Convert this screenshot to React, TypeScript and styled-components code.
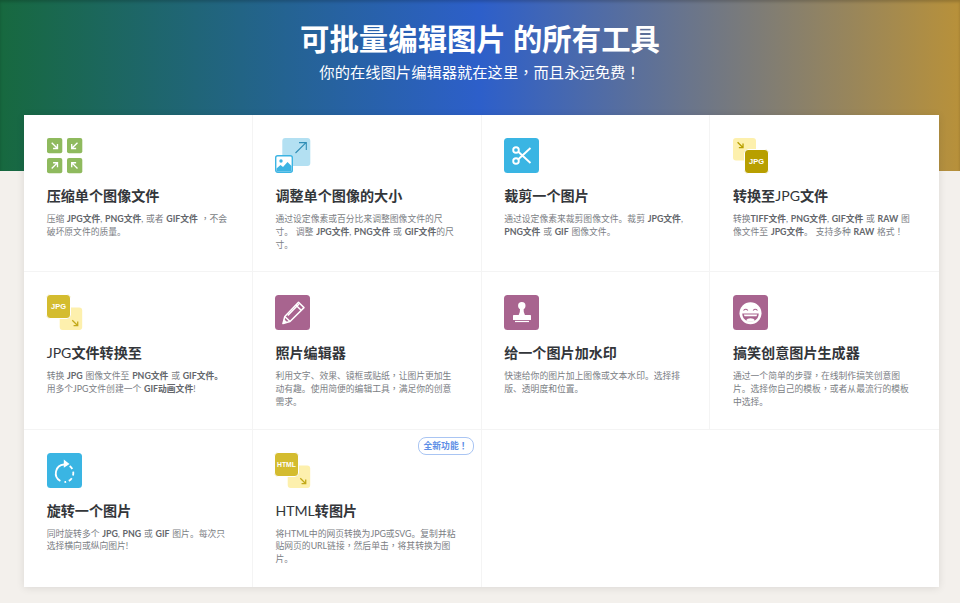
import React from "react";
import styled, { createGlobalStyle } from "styled-components";

const Global = createGlobalStyle`
  html, body { margin: 0; padding: 0; background: #f3f0ec; }
  body { font-family: "Lato", "Noto Sans CJK SC", sans-serif; }
  * { box-sizing: border-box; }
`;

const Page = styled.div`
  width: 960px;
  height: 603px;
  overflow: hidden;
`;

const Hero = styled.header`
  height: 171px;
  padding-top: 20px;
  text-align: center;
  color: #fff;
  background: linear-gradient(90deg, #17693f 0%, #2d5fca 50%, #b8913a 100%);
  box-shadow: inset 0 2px 3px rgba(0, 0, 0, 0.18);
`;

const HeroTitle = styled.h1`
  margin: 0;
  height: 38px;
  font-size: 29.4px;
  line-height: 38px;
  font-weight: 700;
`;

const HeroSub = styled.p`
  margin: 2px 0 0;
  font-size: 15.3px;
  line-height: 22px;
  font-weight: 400;
`;

const Punct = styled.span`
  font-family: "Noto Sans CJK TC", sans-serif;
`;

const Card = styled.main`
  width: 915px;
  height: 472px;
  margin: -56px 0 0 24px;
  position: relative;
  background: #fff;
  display: grid;
  grid-template-columns: repeat(4, 1fr);
  grid-auto-rows: 157.33px;
  box-shadow: 0 1px 8px rgba(0, 0, 0, 0.1);
`;

const Cell = styled.article`
  position: relative;
  padding: 23px 23px 0 22.7px;
  border-right: 1px solid #f4f4f4;
  border-bottom: 1px solid #f4f4f4;
  &:nth-child(4n) { border-right: 0; }
  &:nth-child(n + 9) { border-bottom: 0; }
`;

const Icon = styled.svg`
  display: block;
  width: 35px;
  height: 35px;
  overflow: visible;
`;

const Title = styled.h2`
  margin: 13px 0 0;
  font-size: 14.1px;
  line-height: 20px;
  font-weight: 700;
  color: #33363a;
`;

const LatinTitle = styled.span`
  font-weight: 400;
`;

const Desc = styled.p`
  margin: 7px 0 0;
  font-size: 8.8px;
  line-height: 12.8px;
  word-spacing: 0.5px;
  color: #7b7e84;
`;

const Strong = styled.b`
  font-weight: 700;
  color: #63666b;
`;

const Badge = styled.span`
  position: absolute;
  top: 7px;
  right: 7px;
  width: 56px;
  height: 18px;
  border: 1px solid #a9c5f3;
  border-radius: 8px;
  font-size: 8.8px;
  line-height: 16px;
  font-weight: 700;
  text-align: center;
  color: #5c8ee6;
  background: #fff;
`;

const LABEL = { fill: "#fff", fontFamily: "Liberation Sans, sans-serif", fontWeight: 700, textAnchor: "middle" } as const;

const Arrow = ({ x, y, r, s = 1, color = "#fff" }: { x: number; y: number; r: number; s?: number; color?: string }) => (
  <g transform={`translate(${x} ${y}) rotate(${r}) scale(${s})`} fill="none" stroke={color} strokeWidth="1.6">
    <path d="M-3.400-3.400 3.200 3.200M3.400-1.800V3.400H-1.800" />
  </g>
);

const Compress = () => (
  <Icon viewBox="0 0 35 35">
    <g fill="#8fba5e">
      <rect width="15.300" height="15.300" rx="2" />
      <rect x="20" width="15.300" height="15.300" rx="2" />
      <rect y="20" width="15.300" height="15.300" rx="2" />
      <rect x="20" y="20" width="15.300" height="15.300" rx="2" />
    </g>
    <Arrow x={7.600} y={7.600} r={0} s={0.85} />
    <Arrow x={27.600} y={7.600} r={90} s={0.85} />
    <Arrow x={7.600} y={27.600} r={-90} s={0.85} />
    <Arrow x={27.600} y={27.600} r={180} s={0.85} />
  </Icon>
);

const Resize = () => (
  <Icon viewBox="0 0 35 35">
    <rect x="7.300" width="28" height="28" rx="3" fill="#b3e0f2" />
    <path d="M20.500 15 31 4.700M24 4.600h7.300V12" fill="none" stroke="#2f8db6" strokeWidth="1.100" />
    <rect x=".7" y="17.700" width="16.600" height="16.600" rx="2" fill="#fff" stroke="#3cb4e3" strokeWidth="1.400" />
    <circle cx="6" cy="23" r="1.700" fill="#3cb4e3" />
    <path d="M1.500 33.500v-3l4-3.500 2.500 2 4.500-5 4 4v5.500z" fill="#3cb4e3" />
  </Icon>
);

const Crop = () => (
  <Icon viewBox="0 0 35 35">
    <rect width="35" height="35" rx="3.500" fill="#3ab5e3" />
    <g fill="none" stroke="#fff" strokeWidth="1.900">
      <circle cx="12" cy="12" r="2.800" />
      <circle cx="12" cy="23" r="2.800" />
      <path d="M14.300 13.800 26.500 25M14.300 21.200 26.500 10" />
    </g>
  </Icon>
);

const ToJpg = () => (
  <Icon viewBox="0 0 35 35">
    <rect width="23" height="22.500" rx="3" fill="#fdf0ad" />
    <Arrow x={7.300} y={7} r={0} s={0.8} color="#b89f00" />
    <rect x="11.500" y="11.500" width="24" height="24" rx="3.500" fill="#b89f00" stroke="#fff" strokeWidth="1" />
    <text x="23.500" y="26" fontSize="7.500" {...LABEL}>JPG</text>
  </Icon>
);

const FromLabel = ({ label, size }: { label: string; size: number }) => (
  <Icon viewBox="0 0 35 35">
    <rect x="12.700" y="12.500" width="22.500" height="22.500" rx="3" fill="#fdf0ad" />
    <Arrow x={28} y={28} r={0} s={0.8} color="#c2a91a" />
    <rect x="-.5" y="-.5" width="24" height="24" rx="3.500" fill="#d4bc2f" stroke="#fff" strokeWidth="1" />
    <text x="11.500" y="14.200" fontSize={size} {...LABEL}>{label}</text>
  </Icon>
);

const Editor = () => (
  <Icon viewBox="0 0 35 35">
    <rect width="35" height="35" rx="3.500" fill="#a8648f" />
    <g fill="none" stroke="#fff" strokeWidth="1.500" strokeLinejoin="round">
      <path d="M8 28.500 9.800 21.500 23.500 7.300 29 12.600 15 26.500z" />
      <path d="M9.800 21.500 15 26.500M20.800 10 26.200 15.300M12.800 20.500 24 9" />
    </g>
    <path d="M7.500 29 9 24l3.500 3.500z" fill="#fff" />
  </Icon>
);

const Stamp = () => (
  <Icon viewBox="0 0 35 35">
    <rect width="35" height="35" rx="3.500" fill="#a8648f" />
    <circle cx="17.800" cy="10.800" r="3.700" fill="#fff" />
    <path d="M16 13.500h3.600l.2 3.500 1.200 3.200h-6.400l1.200-3.200z" fill="#fff" />
    <rect x="9" y="20" width="18" height="5" rx=".6" fill="#fff" />
    <rect x="11" y="25.900" width="14" height="1.200" fill="#fff" />
  </Icon>
);

const Laugh = () => (
  <Icon viewBox="0 0 35 35">
    <rect width="35" height="35" rx="3.500" fill="#a8648f" />
    <circle cx="17.500" cy="18.300" r="11" fill="#fff" />
    <path d="M10.500 15.500q2.200-2.600 4.400 0M20.100 15.500q2.200-2.600 4.400 0" fill="none" stroke="#a8648f" strokeWidth="1.100" />
    <path d="M9.300 18.500h16.400c0 4.800-3.400 8-8.200 8s-8.200-3.200-8.200-8z" fill="#a8648f" />
    <path d="M10.800 19.600h13.400l-.7 1.600H11.500z" fill="#fff" />
    <path d="M13 25.300a4.800 3 0 0 1 9 0 8 8 0 0 1-9 0z" fill="#fff" />
  </Icon>
);

const Rotate = () => (
  <Icon viewBox="0 0 35 35">
    <rect width="35" height="35" rx="3.500" fill="#3ab5e3" />
    <g fill="none" stroke="#fff" strokeWidth="1.800">
      <path d="M17 11.500a8.800 8.800 0 0 0-3.600 16.500" />
      <path d="M17.500 11.300a8.800 8.800 0 0 1 8.800 8.900 8.800 8.800 0 0 1-8.800 8.800" strokeDasharray="4 2.800" strokeDashoffset="-5.500" />
    </g>
    <path d="M16.800 6.500 22.500 11l-5.700 3.800z" fill="#fff" />
  </Icon>
);

type Item = { icon: React.ReactNode; title: React.ReactNode; desc: React.ReactNode; badge?: React.ReactNode };

const items: Item[] = [
  {
    icon: <Compress />,
    title: "压缩单个图像文件",
    desc: <>压缩 <Strong>JPG文件</Strong>, <Strong>PNG文件</Strong>, 或者 <Strong>GIF文件</Strong> <Punct>，</Punct>不会破坏原文件的质量。</>,
  },
  {
    icon: <Resize />,
    title: "调整单个图像的大小",
    desc: <>通过设定像素或百分比来调整图像文件的尺寸。 调整 <Strong>JPG文件</Strong>, <Strong>PNG文件</Strong> 或 <Strong>GIF文件</Strong>的尺寸。</>,
  },
  {
    icon: <Crop />,
    title: "裁剪一个图片",
    desc: <>通过设定像素来裁剪图像文件。裁剪 <Strong>JPG文件</Strong>, <Strong>PNG文件</Strong> 或 <Strong>GIF</Strong> 图像文件。</>,
  },
  {
    icon: <ToJpg />,
    title: <>转换至<LatinTitle>JPG</LatinTitle>文件</>,
    desc: <>转换<Strong>TIFF文件</Strong>, <Strong>PNG文件</Strong>, <Strong>GIF文件</Strong> 或 <Strong>RAW</Strong> 图像文件至 <Strong>JPG文件</Strong>。 支持多种 <Strong>RAW</Strong> 格式<Punct>！</Punct></>,
  },
  {
    icon: <FromLabel label="JPG" size={7.500} />,
    title: <><LatinTitle>JPG</LatinTitle>文件转换至</>,
    desc: <>转换 <Strong>JPG</Strong> 图像文件至 <Strong>PNG文件</Strong> 或 <Strong>GIF文件。</Strong>用多个JPG文件创建一个 <Strong>GIF动画文件</Strong>!</>,
  },
  {
    icon: <Editor />,
    title: "照片编辑器",
    desc: <>利用文字、效果、镜框或贴纸<Punct>，</Punct>让图片更加生动有趣。使用简便的编辑工具<Punct>，</Punct>满足你的创意需求。</>,
  },
  {
    icon: <Stamp />,
    title: "给一个图片加水印",
    desc: "快速给你的图片加上图像或文本水印。选择排版、透明度和位置。",
  },
  {
    icon: <Laugh />,
    title: "搞笑创意图片生成器",
    desc: <>通过一个简单的步骤<Punct>，</Punct>在线制作搞笑创意图片。选择你自己的模板<Punct>，</Punct>或者从最流行的模板中选择。</>,
  },
  {
    icon: <Rotate />,
    title: "旋转一个图片",
    desc: <>同时旋转多个 <Strong>JPG</Strong>, <Strong>PNG</Strong> 或 <Strong>GIF</Strong> 图片。每次只选择横向或纵向图片!</>,
  },
  {
    icon: <FromLabel label="HTML" size={6.800} />,
    title: <><LatinTitle>HTML</LatinTitle>转图片</>,
    desc: <>将HTML中的网页转换为JPG或SVG。复制并粘贴网页的URL链接<Punct>，</Punct>然后单击<Punct>，</Punct>将其转换为图片。</>,
    badge: <>全新功能<Punct>！</Punct></>,
  },
];

export default function App() {
  return (
    <Page>
      <Global />
      <Hero>
        <HeroTitle>可批量编辑图片 的所有工具</HeroTitle>
        <HeroSub>你的在线图片编辑器就在这里<Punct>，</Punct>而且永远免费<Punct>！</Punct></HeroSub>
      </Hero>
      <Card>
        {items.map((item, i) => (
          <Cell key={i}>
            {item.badge && <Badge>{item.badge}</Badge>}
            {item.icon}
            <Title>{item.title}</Title>
            <Desc>{item.desc}</Desc>
          </Cell>
        ))}
      </Card>
    </Page>
  );
}
